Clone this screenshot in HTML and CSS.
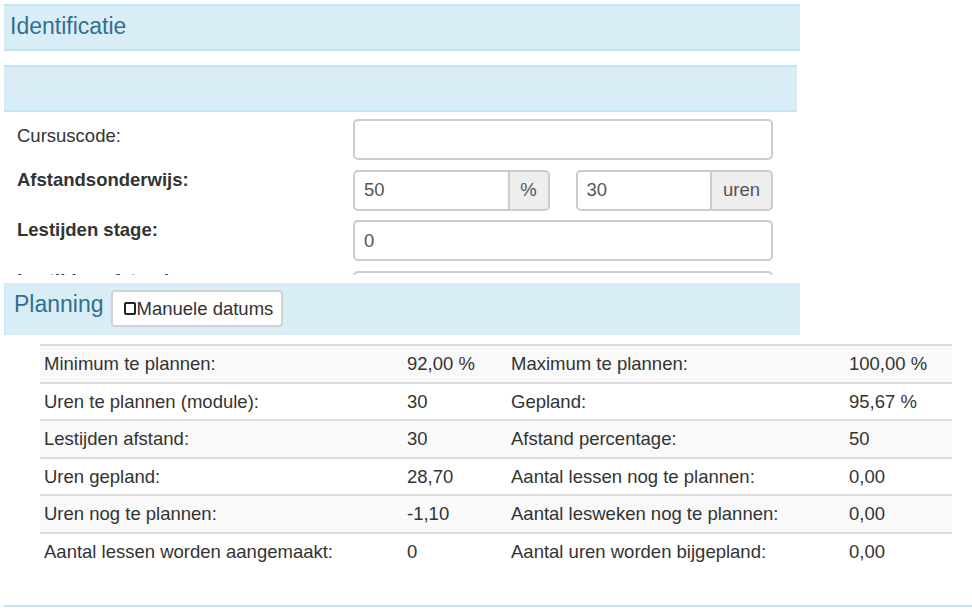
FILE: index.html
```html
<!DOCTYPE html>
<html lang="nl">
<head>
    <meta charset="UTF-8">
    <meta name="viewport" content="width=device-width, initial-scale=1.0">
    <title>Cursus - Identificatie en planning</title>
    <link rel="stylesheet" href="styles.css">
</head>
<body>

    <div class="panel-kop">
        <h3>Identificatie</h3>
    </div>
    <div class="panel-kop leeg"></div>

    <div class="formulier">
        <div class="rij">
            <label class="gewoon" for="cursuscode">Cursuscode:</label>
            <input type="text" id="cursuscode" class="veld">
        </div>
        <div class="rij">
            <label for="afstand-pct">Afstandsonderwijs:</label>
            <div class="dubbel">
                <div class="groep">
                    <input type="text" id="afstand-pct" value="50">
                    <span class="addon">%</span>
                </div>
                <div class="groep">
                    <input type="text" id="afstand-uren" value="30">
                    <span class="addon uren">uren</span>
                </div>
            </div>
        </div>
        <div class="rij">
            <label for="stage">Lestijden stage:</label>
            <input type="text" id="stage" class="veld" value="0">
        </div>
        <div class="rij">
            <label for="lestijden-afstand">Lestijden afstand:</label>
            <input type="text" id="lestijden-afstand" class="veld">
        </div>
    </div>

    <div class="panel-kop planning">
        <h3>Planning</h3>
        <button class="knop"><span class="vakje"></span>Manuele datums</button>
    </div>

    <table class="overzicht">
        <colgroup>
            <col style="width: 363px">
            <col style="width: 104px">
            <col style="width: 338px">
            <col style="width: 107px">
        </colgroup>
        <tr>
            <td>Minimum te plannen:</td><td>92,00 %</td>
            <td>Maximum te plannen:</td><td>100,00 %</td>
        </tr>
        <tr>
            <td>Uren te plannen (module):</td><td>30</td>
            <td>Gepland:</td><td>95,67 %</td>
        </tr>
        <tr>
            <td>Lestijden afstand:</td><td>30</td>
            <td>Afstand percentage:</td><td>50</td>
        </tr>
        <tr>
            <td>Uren gepland:</td><td>28,70</td>
            <td>Aantal lessen nog te plannen:</td><td>0,00</td>
        </tr>
        <tr>
            <td>Uren nog te plannen:</td><td>-1,10</td>
            <td>Aantal lesweken nog te plannen:</td><td>0,00</td>
        </tr>
        <tr>
            <td>Aantal lessen worden aangemaakt:</td><td>0</td>
            <td>Aantal uren worden bijgepland:</td><td>0,00</td>
        </tr>
    </table>

    <div class="volgende"></div>

</body>
</html>
```

FILE: styles.css
```css
body {
    margin: 0;
    font-family: "Liberation Sans", Arial, sans-serif;
    font-size: 18.5px;
    color: #333;
    background: #fff;
}

.panel-kop {
    box-sizing: border-box;
    margin: 4px 0 0 4px;
    width: 796px;
    height: 46.7px;
    background: #d9edf7;
    border-top: 2px solid #c2e6f1;
    border-bottom: 2px solid #c2e6f1;
    display: flex;
    align-items: center;
}

.panel-kop h3 {
    margin: 0;
    padding: 0 0 1px 6px;
    font-size: 23px;
    font-weight: normal;
    color: #31708f;
}

.panel-kop.leeg {
    margin-top: 14.3px;
    width: 793px;
    height: 47px;
}

.formulier {
    box-sizing: border-box;
    width: 800px;
    height: 163px;
    padding-top: 7.5px;
    margin-bottom: 8px;
    overflow: hidden;
}

.rij {
    display: flex;
    align-items: flex-start;
    margin-bottom: 9.5px;
}

.rij label {
    box-sizing: border-box;
    width: 353px;
    padding-left: 17px;
    line-height: 20px;
    font-weight: bold;
}

.rij label.gewoon {
    font-weight: normal;
    padding-top: 7px;
}

input {
    box-sizing: border-box;
    height: 41px;
    border: 2px solid #ccc;
    border-radius: 5px;
    padding: 0 9px;
    font-family: inherit;
    font-size: 18.5px;
    color: #555;
    background: #fff;
    outline: none;
}

.veld {
    width: 420px;
}

.dubbel {
    display: grid;
    grid-template-columns: 196.5px 197.5px;
    column-gap: 26px;
}

.groep {
    display: flex;
    height: 41px;
}

.groep input {
    flex: 1;
    min-width: 0;
    border-radius: 5px 0 0 5px;
}

.addon {
    box-sizing: border-box;
    width: 40px;
    display: flex;
    align-items: center;
    justify-content: center;
    background: #eee;
    border: 2px solid #ccc;
    border-left: none;
    border-radius: 0 5px 5px 0;
    color: #555;
}

.addon.uren {
    width: 61px;
}

.panel-kop.planning {
    margin-top: 0;
    height: 52px;
    border-top: none;
    border-bottom: none;
    border-left: 1px solid #c2e6f1;
}

.planning h3 {
    padding: 0 0 9px 9px;
}

.knop {
    box-sizing: border-box;
    height: 37px;
    margin-left: 7px;
    padding: 0 8px 0 11px;
    display: inline-flex;
    align-items: center;
    background: #fff;
    border: 2px solid #d2d2d2;
    border-radius: 4px;
    font-family: inherit;
    font-size: 18.5px;
    color: #333;
}

.vakje {
    box-sizing: border-box;
    width: 12px;
    height: 13px;
    margin-right: 1px;
    border: 2px solid #222;
    border-radius: 2px;
}

.overzicht {
    margin: 9.5px 0 0 40px;
    width: 912px;
    table-layout: fixed;
    border-collapse: separate;
    border-spacing: 0;
}

.overzicht td {
    padding: 0 4px;
    line-height: 35.5px;
    border-top: 2px solid #ddd;
    white-space: nowrap;
}

.overzicht tr:nth-child(odd) td {
    background: #f9f9f9;
}

.volgende {
    margin: 35.5px 0 0 4px;
    height: 8px;
    border-top: 2.5px solid #c2e6f1;
}
```
